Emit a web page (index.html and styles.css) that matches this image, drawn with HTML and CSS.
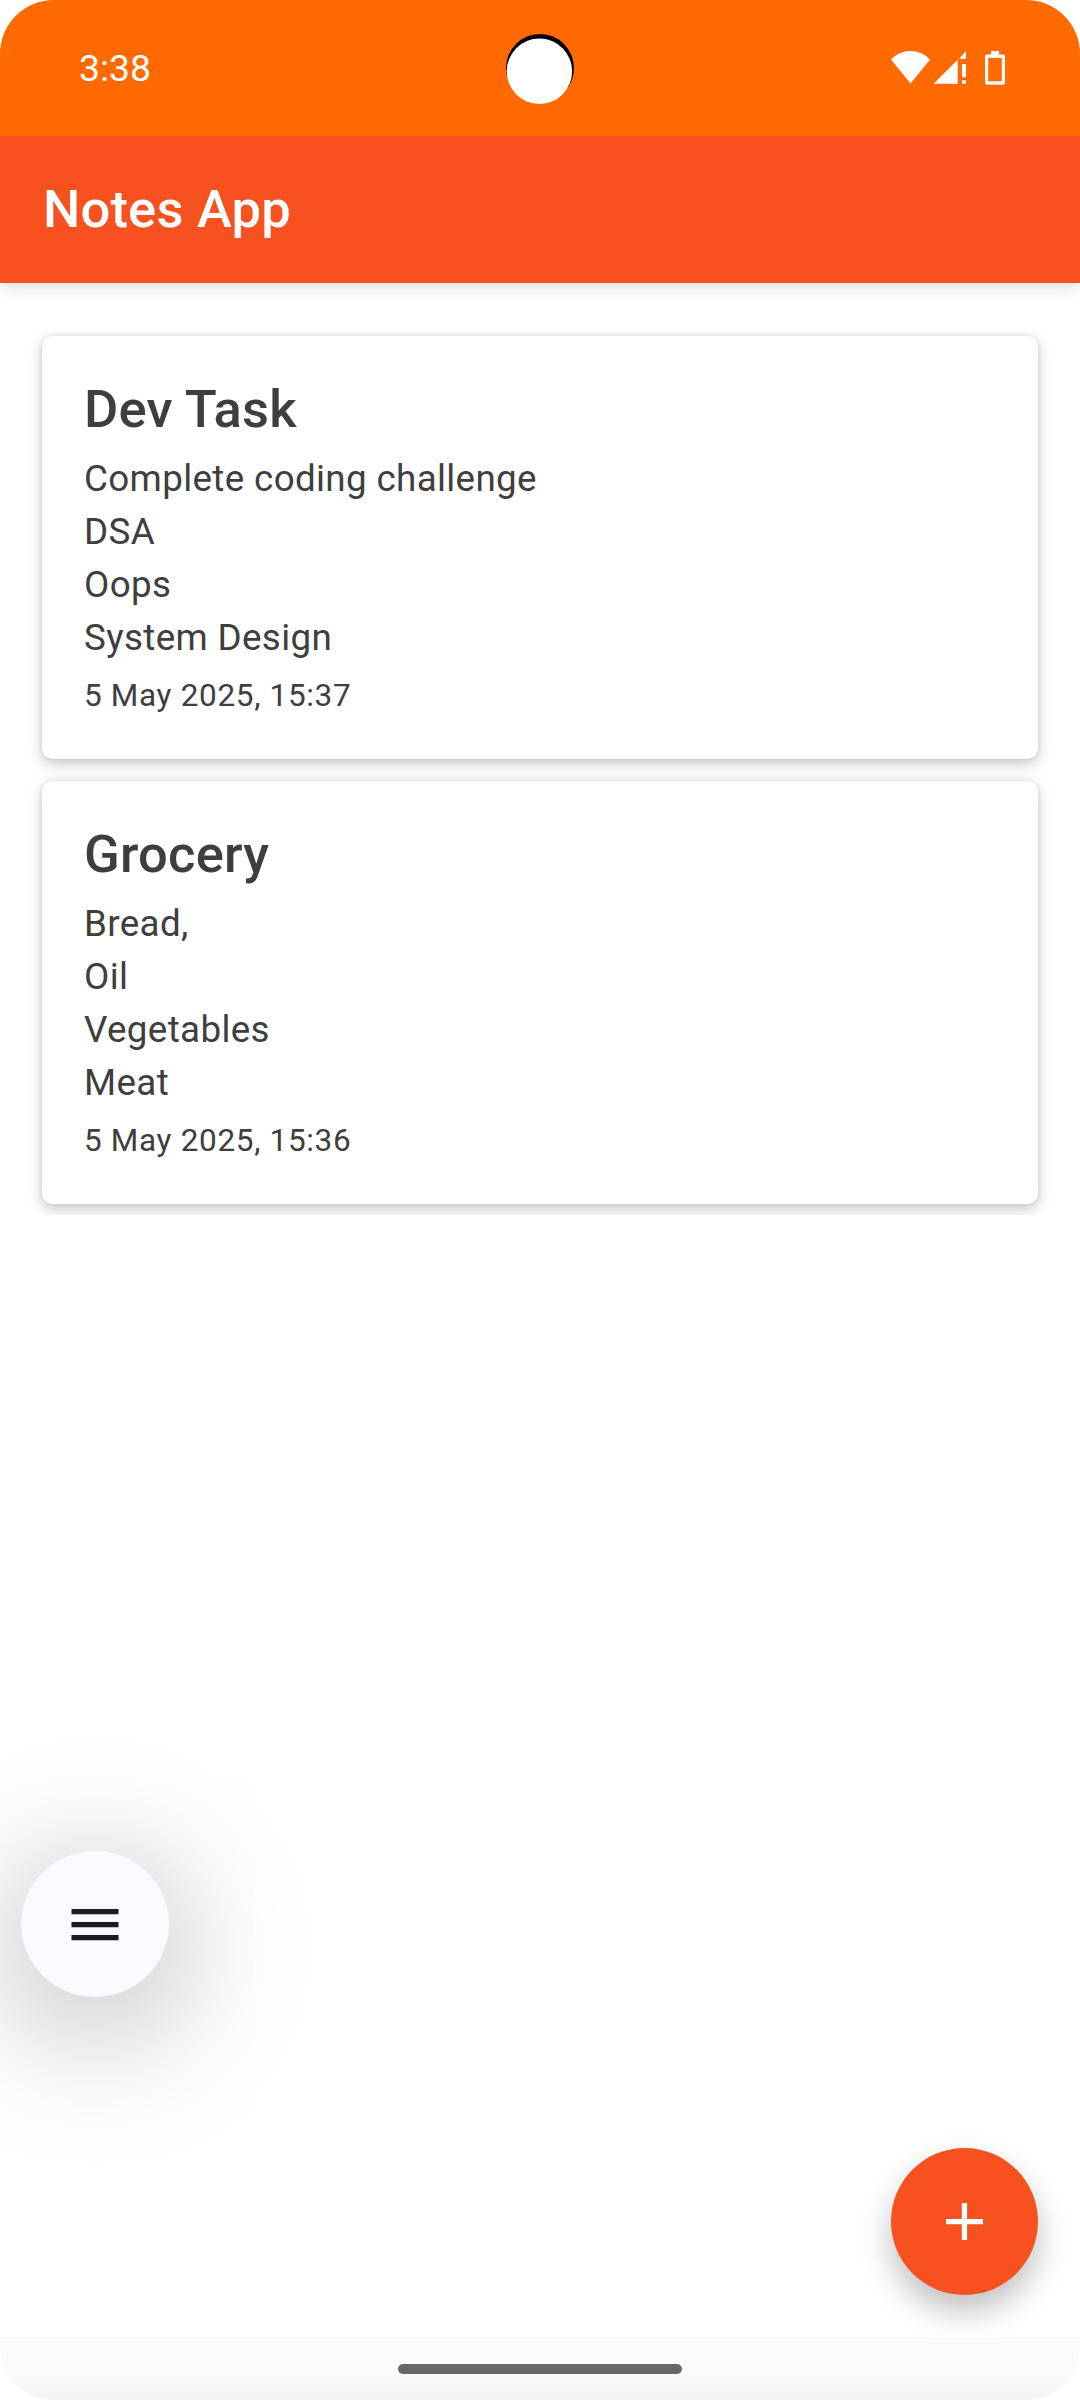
FILE: index.html
```html
<!DOCTYPE html>
<html lang="en">
<head>
<meta charset="utf-8">
<title>Notes App</title>
<link rel="stylesheet" href="styles.css">
</head>
<body>
<div class="screen">
  <div class="status-bar">
    <span class="clock">3:38</span>
    <svg class="camera" viewBox="0 0 70 72"><circle cx="35" cy="35" r="34" fill="#000"/><circle cx="34.4" cy="38.3" r="32.7" fill="#fff"/></svg>
    <svg class="status-icons" viewBox="0 0 116 36" fill="#fff">
      <path d="M1 9.500Q9 1 20.500 1T40 9.500L20.500 33.500Z"/>
      <path d="M43.500 33.700L67.700 9.800V33.700Z"/>
      <path d="M69 8.700L76 1V8.700ZM72 14H76V27.300H72ZM72 30.300H76V33.700H72Z"/>
      <path fill-rule="evenodd" d="M101 1H109V4.500H113Q115 4.500 115 6.500V32.700Q115 34.700 113 34.700H97Q95 34.700 95 32.700V6.500Q95 4.500 97 4.500H101ZM98.200 8V31.200H111.800V8Z"/>
    </svg>
  </div>
  <header class="toolbar"><h1 class="toolbar-title">Notes App</h1></header>
  <main class="content">
    <div class="notes">
      <article class="card">
        <h2 class="card-title">Dev Task</h2>
        <p class="card-body">Complete coding challenge<br>DSA<br>Oops<br>System Design</p>
        <time class="card-date">5 May 2025, 15:37</time>
      </article>
      <article class="card">
        <h2 class="card-title">Grocery</h2>
        <p class="card-body">Bread,<br>Oil<br>Vegetables<br>Meat</p>
        <time class="card-date">5 May 2025, 15:36</time>
      </article>
    </div>
    <button class="menu-button" aria-label="Menu">
      <svg class="menu-icon" viewBox="0 0 48 32" fill="#191c20"><path d="M.5 0H47.500V5.300H.5ZM.5 13H47.500V18.300H.5ZM.5 26H47.500V31.300H.5Z"/></svg>
    </button>
    <button class="add-button" aria-label="Add note">
      <svg class="add-icon" viewBox="0 0 37 37" fill="#fff"><path d="M15.800 0H21.100V15.900H37V21.200H21.100V37H15.800V21.200H0V15.900H15.800Z"/></svg>
    </button>
  </main>
  <nav class="nav-bar"><span class="nav-handle"></span></nav>
</div>
</body>
</html>
```

FILE: styles.css
```css
* { box-sizing: border-box; }
body { margin: 0; background: #fff; font-family: Roboto, "Liberation Sans", sans-serif; }
h1, h2, p { margin: 0; font-weight: inherit; }
button { border: 0; padding: 0; }
svg { display: block; }

.screen {
  width: 1080px;
  height: 2400px;
  display: flex;
  flex-direction: column;
  overflow: hidden;
  border-radius: 54px;
  background: #fff;
}

.status-bar {
  height: 136px;
  flex: none;
  display: grid;
  grid-template-columns: 1fr 70px 1fr;
  align-items: start;
  padding: 0 74px 0 79px;
  position: relative;
  z-index: 1;
  background: #ff6900;
}
.clock { padding-top: 46px; font-size: 37.3px; line-height: 44px; color: #fff; }
.camera { width: 70px; height: 72px; margin: 33px 0 0 -2.500px; }
.status-icons { width: 116px; height: 36px; margin-top: 50px; justify-self: end; }

.toolbar {
  height: 147px;
  flex: none;
  display: flex;
  align-items: center;
  padding: 0 43px 2px;
  position: relative;
  background: #f6511e;
  box-shadow: 0 4px 16px rgba(0, 0, 0, .14);
}
.toolbar-title { font-size: 52.5px; line-height: 62px; font-weight: 500; letter-spacing: .2px; color: #fff; }

.content { flex: 1; position: relative; }

.notes {
  margin-top: 32px;
  padding: 21px 42px 11px;
  display: flex;
  flex-direction: column;
  gap: 22px;
  overflow: hidden;
}
.card {
  height: 423px;
  padding: 42px;
  border-radius: 10.5px;
  background: #fff;
  color: #3e3e3e;
  box-shadow: 0 5px 15px rgba(0, 0, 0, .21), 0 0 5px rgba(0, 0, 0, .1);
}
.card-title { font-size: 52.5px; line-height: 62px; font-weight: 500; letter-spacing: .2px; }
.card-body { margin-top: 12px; font-size: 36.75px; line-height: 53px; letter-spacing: .36px; }
.card-date { display: block; margin-top: 10.5px; font-size: 31.5px; line-height: 42px; letter-spacing: .67px; }

.menu-button {
  position: absolute;
  left: 21px;
  top: 1568px;
  width: 148px;
  height: 146px;
  display: grid;
  place-items: center;
  border-radius: 50%;
  background: #f9f9ff;
  box-shadow: 0 25px 140px rgba(0, 0, 0, .35);
}
.menu-icon { width: 48px; height: 32px; margin-top: 1px; }

.add-button {
  position: absolute;
  right: 42px;
  bottom: 42px;
  width: 147px;
  height: 147px;
  display: grid;
  place-items: center;
  border-radius: 50%;
  background: #f6511e;
  box-shadow: 0 16px 32px rgba(0, 0, 0, .25);
}
.add-icon { width: 37px; height: 37px; }

.nav-bar {
  height: 63px;
  flex: none;
  display: grid;
  place-items: center;
  padding-top: 1px;
  position: relative;
  background: linear-gradient(#fafafa 65%, #f3f3f3);
}
.nav-handle { width: 284px; height: 10px; border-radius: 5px; background: #666; }
```
